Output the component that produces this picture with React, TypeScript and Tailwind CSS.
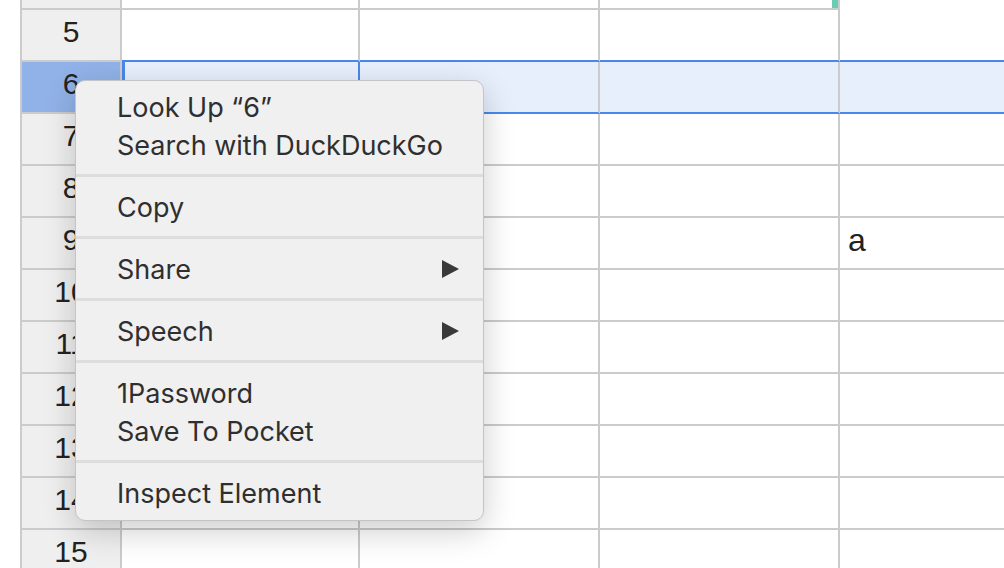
import React from "react";

const rows = [4, 5, 6, 7, 8, 9, 10, 11, 12, 13, 14, 15];

type MenuEntry =
  | { kind: "item"; label: string; submenu?: boolean }
  | { kind: "sep" };

const menu: MenuEntry[] = [
  { kind: "item", label: "Look Up \u201c6\u201d" },
  { kind: "item", label: "Search with DuckDuckGo" },
  { kind: "sep" },
  { kind: "item", label: "Copy" },
  { kind: "sep" },
  { kind: "item", label: "Share", submenu: true },
  { kind: "sep" },
  { kind: "item", label: "Speech", submenu: true },
  { kind: "sep" },
  { kind: "item", label: "1Password" },
  { kind: "item", label: "Save To Pocket" },
  { kind: "sep" },
  { kind: "item", label: "Inspect Element" },
];

function SheetRow({ n }: { n: number }) {
  const selected = n === 6;
  const aboveSelected = n === 5;
  const h = n === 4 ? "h-[10px]" : "h-[52px]";
  const cellBorder = selected || aboveSelected ? "border-b-[#4a87ec]" : "border-b-[#cbcbcb]";
  const cellBg = selected ? "bg-[#e7eefc]" : "bg-white";

  return (
    <div className={`flex ${h} shrink-0`}>
      <div
        className={`w-[102px] shrink-0 border-l-2 border-r-2 border-b-2 border-[#cbcbcb] flex items-center justify-center pb-[6px] text-[30px] text-[#222] ${
          selected ? "bg-[#91b2e8]" : "bg-[#efefef]"
        }`}
      >
        {n !== 4 && <span className="leading-none">{n}</span>}
      </div>
      <div
        className={`w-[238px] shrink-0 border-b-2 border-r-2 ${cellBorder} ${cellBg} ${
          selected
            ? "border-r-[#4a87ec] shadow-[inset_3px_0_0_#4a87ec]"
            : "border-r-[#cbcbcb]"
        }`}
      />
      <div className={`w-[240px] shrink-0 border-b-2 border-r-2 border-r-[#cbcbcb] ${cellBorder} ${cellBg}`} />
      <div
        className={`w-[240px] shrink-0 border-b-2 border-r-2 border-r-[#cbcbcb] ${cellBorder} ${cellBg} flex justify-end`}
      >
        {n === 4 && <div className="w-[6px] h-full bg-[#6acdb2]" />}
      </div>
      <div className={`flex-1 border-b-2 ${cellBorder} ${cellBg} flex items-end pl-[8px] pb-[12px]`}>
        {n === 9 && <span className="text-[32px] leading-none text-[#222]">a</span>}
      </div>
    </div>
  );
}

function ContextMenu() {
  return (
    <div className="absolute left-[75px] top-[80px] w-[409px] rounded-[10px] border border-[#c4c4c8] bg-[#f0f0f0] pt-[7px] pb-[8px] shadow-[0_10px_32px_rgba(0,0,0,0.2)] font-['Inter',sans-serif] text-[27px] text-[#2f2f2f]">
      {menu.map((entry, i) =>
        entry.kind === "sep" ? (
          <div key={i} className="pt-[10px] pb-[11px]">
            <div className="h-[3px] bg-[#dddddd]" />
          </div>
        ) : (
          <div key={i} className="h-[38px] flex items-center justify-between pl-[41px] pr-[24px]">
            <span className="leading-none">{entry.label}</span>
            {entry.submenu && (
              <svg width="17" height="18" viewBox="0 0 17 18">
                <polygon points="0,0 17,9 0,18" fill="#3a3a3a" />
              </svg>
            )}
          </div>
        )
      )}
    </div>
  );
}

export default function App() {
  return (
    <div className="relative w-[1004px] h-[568px] overflow-hidden bg-white font-['Liberation_Sans',Arial,sans-serif]">
      <div className="flex flex-col pl-[20px]">
        {rows.map((n) => (
          <SheetRow key={n} n={n} />
        ))}
      </div>
      <ContextMenu />
    </div>
  );
}
